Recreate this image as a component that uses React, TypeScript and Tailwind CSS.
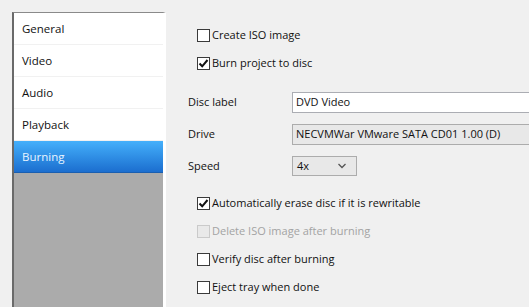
import React from "react";

// --- Small pieces ---
function CheckBox({ checked = false, disabled = false }: { checked?: boolean; disabled?: boolean }) {
  return (
    <span
      className={
        "flex items-center justify-center w-[13px] h-[13px] border shrink-0 " +
        (disabled ? "border-[#cacaca] bg-[#e9e9e9]" : "border-[#3a3a3a] bg-white")
      }
    >
      {checked && (
        <svg width="11" height="11" viewBox="0 0 11 11">
          <path d="M1.5 5.5 L4.2 8.3 L9.5 2" fill="none" stroke="#111" strokeWidth="2" />
        </svg>
      )}
    </span>
  );
}

function CheckRow({ label, checked, disabled }: { label: string; checked?: boolean; disabled?: boolean }) {
  return (
    <div className="flex items-center h-[28px] pl-[31px] gap-[1px]">
      <CheckBox checked={checked} disabled={disabled} />
      <span className={"ml-[1px] " + (disabled ? "text-[#a3a3a3]" : "text-[#111]")}>{label}</span>
    </div>
  );
}

const menu = ["General", "Video", "Audio", "Playback", "Burning"];

// --- Page ---
export default function App() {
  return (
    <div
      className="w-[529px] h-[307px] overflow-hidden bg-[#f0f0f0] flex"
      style={{ fontFamily: '"Open Sans", "Noto Sans", sans-serif' }}
    >
      {/* sidebar */}
      <div className="mt-[12px] ml-[12px] w-[154px] shrink-0 flex flex-col text-[11.5px] border-l-2 border-t border-l-[#6a6a6a] border-t-[#8a8a8a] border-r-[3px] border-r-white bg-[#ababab]">
        {menu.map((m) =>
          m === "Burning" ? (
            <div
              key={m}
              className="h-[32px] flex items-center pl-[8px] text-[#e8f4ff] bg-gradient-to-b from-[#45b0fb] to-[#1c6ecf] border-b border-[#1a5fb0]"
            >
              {m}
            </div>
          ) : (
            <div key={m} className="h-[32px] flex items-center pl-[8px] bg-white text-[#111] border-b border-[#f1f1f1]">
              {m}
            </div>
          )
        )}
      </div>

      {/* settings */}
      <div className="flex-1 flex flex-col pt-[21px] min-w-0 text-[11px]">
        <CheckRow label="Create ISO image" />
        <CheckRow label="Burn project to disc" checked />

        <div className="mt-[9px] flex flex-col">
          <div className="h-[32px] flex items-center pl-[22px]">
            <span className="w-[104px] shrink-0 text-[#111]">Disc label</span>
            <div className="h-[21px] flex-1 -mr-[20px] bg-white border border-[#abadb3] flex items-center pl-[3px] text-[#111]">
              DVD Video
            </div>
          </div>
          <div className="h-[32px] flex items-center pl-[22px]">
            <span className="w-[104px] shrink-0 text-[#111]">Drive</span>
            <div className="h-[21px] flex-1 -mr-[20px] bg-[#e8e8e8] border border-[#acacac] flex items-center pl-[3px] text-[#111] whitespace-nowrap">
              NECVMWar VMware SATA CD01 1.00 (D)
            </div>
          </div>
          <div className="h-[32px] flex items-center pl-[22px]">
            <span className="w-[104px] shrink-0 text-[#111]">Speed</span>
            <div className="h-[20px] w-[65px] bg-[#e8e8e8] border border-[#acacac] flex items-center justify-between pl-[4px] pr-[10px] text-[#111]">
              4x
              <svg width="8" height="6" viewBox="0 0 8 6">
                <path d="M0.5 1 L4 4.5 L7.5 1" fill="none" stroke="#555" strokeWidth="1.3" />
              </svg>
            </div>
          </div>
        </div>

        <div className="mt-[7px] flex flex-col">
          <CheckRow label="Automatically erase disc if it is rewritable" checked />
          <CheckRow label="Delete ISO image after burning" disabled />
          <CheckRow label="Verify disc after burning" />
          <CheckRow label="Eject tray when done" />
        </div>
      </div>
    </div>
  );
}
